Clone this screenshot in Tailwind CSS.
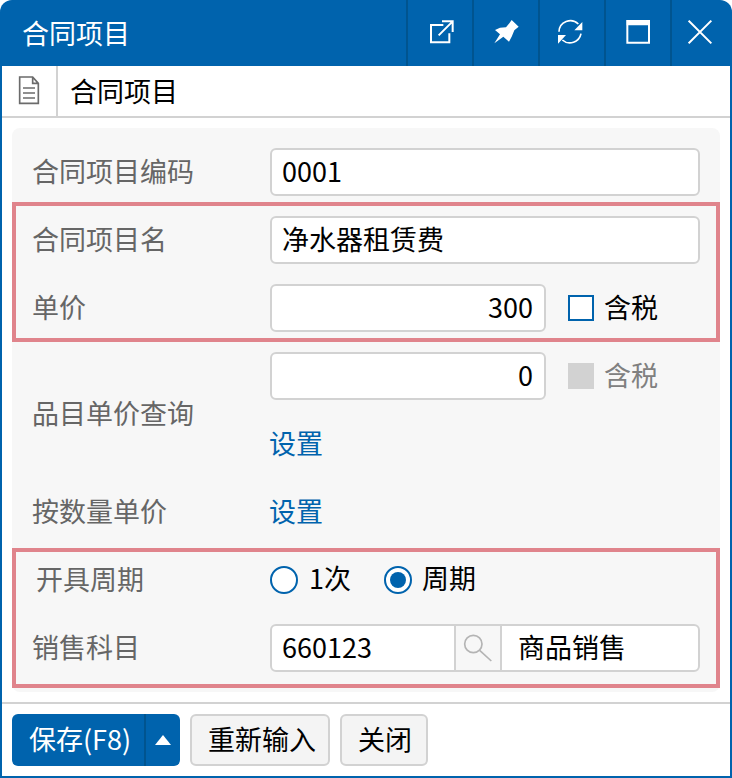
<!DOCTYPE html>
<html lang="zh-CN">
<head>
  <meta charset="UTF-8">
  <title>合同项目</title>
  <script src="https://cdn.jsdelivr.net/npm/@tailwindcss/browser@4"></script>
</head>
<body class="bg-white">
  <div class="w-[732px] h-[778px] flex flex-col overflow-hidden rounded-t-[12px] font-['Noto_Sans_CJK_SC','Noto_Sans',sans-serif] text-[27px] leading-[36px] text-black">
    <!-- title bar -->
    <div class="h-[66px] shrink-0 flex items-center justify-between bg-[#0063ad] text-white">
      <div class="pl-[22px]">合同项目</div>
      <div class="flex h-full">
        <div class="w-[66px] h-full flex items-center justify-center border-l-2 border-[#00548f]">
          <svg width="28" height="28" viewBox="78 57 84 84" fill="none" stroke="#fff" stroke-width="6"><path d="M130 75H93V127H148V100M116 106L158 64M126 64H158V96"/></svg>
        </div>
        <div class="w-[66px] h-full flex items-center justify-center border-l-2 border-[#00548f]">
          <svg width="28" height="28" viewBox="276 57 84 84" fill="#fff"><path d="M335 60L356 80L343 91L335 110L327 125L310 110L283 130L300 103L285 90L300 83L318 82L328 70Z"/></svg>
        </div>
        <div class="w-[66px] h-full flex items-center justify-center border-l-2 border-[#00548f]">
          <svg width="28" height="28" viewBox="474 57 84 84" fill="none" stroke="#fff" stroke-width="5"><path d="M477 95A34 34 0 0 1 535 72M543 101A34 34 0 0 1 487 120"/><path fill="#fff" stroke="none" d="M547 66V91H523ZM474 105H498L474 131Z"/></svg>
        </div>
        <div class="w-[66px] h-full flex items-center justify-center border-l-2 border-[#00548f]">
          <svg width="28" height="28" viewBox="672 57 84 84" fill="none" stroke="#fff" stroke-width="6"><path d="M682 63H747V128H682Z"/><path fill="#fff" stroke="none" d="M680 60H750V76H680Z"/></svg>
        </div>
        <div class="w-[62px] h-full flex items-center justify-center border-l-2 border-[#00548f]">
          <svg width="28" height="28" viewBox="864 57 84 84" fill="none" stroke="#fff" stroke-width="6"><path d="M866 62L934 130M934 62L866 130"/></svg>
        </div>
      </div>
    </div>

    <div class="flex-1 flex flex-col border-x-2 border-b-2 border-[#0063ad]">
      <!-- tab row -->
      <div class="h-[52px] shrink-0 flex border-b-2 border-[#d2d2d2]">
        <div class="w-[56px] flex items-center justify-center border-r-2 border-[#d2d2d2]">
          <svg width="32" height="32" viewBox="42 225 96 96" fill="none" stroke="#6b6b6b" stroke-width="5"><path d="M62 231H101L118 250V310H62ZM101 231V250H118M72 264H108M72 279H108M72 294H108"/></svg>
        </div>
        <div class="pl-[12px] flex items-center">合同项目</div>
      </div>

      <!-- form panel -->
      <div class="relative ml-[10px] mt-[10px] w-[708px] bg-[#f7f7f7] rounded-[8px] pt-[20px] pb-[20px] pl-[20px] flex flex-col gap-[20px] text-[#666]">
        <div class="flex h-[48px] items-center">
          <div class="w-[238px] pb-[2px]">合同项目编码</div>
          <input readonly value="0001" class="w-[430px] h-[48px] pl-[10px] pr-[11px] pb-[4px] bg-white border-2 border-[#d2d2d2] rounded-[6px] text-black outline-none">
        </div>
        <div class="flex h-[48px] items-center">
          <div class="w-[238px] pb-[2px]">合同项目名</div>
          <input readonly value="净水器租赁费" class="w-[430px] h-[48px] pl-[10px] pr-[11px] pb-[4px] bg-white border-2 border-[#d2d2d2] rounded-[6px] text-black outline-none">
        </div>
        <div class="flex h-[48px] items-center">
          <div class="w-[238px] pb-[2px]">单价</div>
          <input readonly value="300" class="w-[276px] h-[48px] px-[11px] pb-[4px] text-right bg-white border-2 border-[#d2d2d2] rounded-[6px] text-black outline-none">
          <div class="ml-[22px] w-[26px] h-[26px] bg-white border-2 border-[#0063ad]"></div>
          <div class="ml-[10px] pb-[2px] text-black">含税</div>
        </div>
        <div class="flex items-center">
          <div class="w-[238px] pt-[6px]">品目单价查询</div>
          <div class="flex flex-col gap-[20px]">
            <div class="flex h-[48px] items-center">
              <input readonly value="0" class="w-[276px] h-[48px] px-[11px] pb-[4px] text-right bg-white border-2 border-[#d2d2d2] rounded-[6px] text-black outline-none">
              <div class="ml-[22px] w-[26px] h-[26px] bg-[#d2d2d2]"></div>
              <div class="ml-[10px] pb-[2px] text-[#808080]">含税</div>
            </div>
            <div class="h-[48px] pb-[2px] flex items-center text-[#0063ad] -ml-[1px]">设置</div>
          </div>
        </div>
        <div class="flex h-[48px] items-center">
          <div class="w-[238px] pb-[2px]">按数量单价</div>
          <div class="text-[#0063ad] pb-[2px] -ml-[1px]">设置</div>
        </div>
        <div class="flex h-[48px] items-center">
          <div class="w-[238px] pl-[4px] pb-[2px]">开具周期</div>
          <div class="w-[28px] h-[28px] rounded-full bg-white border-2 border-[#0063ad]"></div>
          <div class="ml-[11px] pb-[4px] text-black">1次</div>
          <div class="ml-[33px] w-[28px] h-[28px] rounded-full bg-white border-2 border-[#0063ad] flex items-center justify-center">
            <div class="w-[16px] h-[16px] rounded-full bg-[#0063ad]"></div>
          </div>
          <div class="ml-[10px] pb-[4px] text-black">周期</div>
        </div>
        <div class="flex h-[48px] items-center">
          <div class="w-[238px] pb-[2px]">销售科目</div>
          <div class="w-[430px] h-[48px] flex bg-white border-2 border-[#d2d2d2] rounded-[6px] text-black">
            <div class="w-[182px] pl-[10px] pb-[2px] flex items-center">660123</div>
            <div class="w-[48px] flex items-center justify-center bg-[#f7f7f7] border-x-2 border-[#d2d2d2]">
              <svg width="32" height="32" viewBox="606 276 96 96" fill="none" stroke="#b4b4b4" stroke-width="5"><circle cx="640" cy="312" r="26"/><path d="M659 331L694 363"/></svg>
            </div>
            <div class="pl-[16px] pb-[2px] flex items-center">商品销售</div>
          </div>
        </div>
        <!-- red highlight boxes over the form -->
        <div class="absolute left-0 top-[74px] w-[708px] h-[140px] border-4 border-[#e0848c]"></div>
        <div class="absolute left-0 top-[420px] w-[708px] h-[140px] border-4 border-[#e0848c]"></div>
      </div>

      <!-- footer -->
      <div class="mt-[10px] flex-1 border-t-2 border-[#d2d2d2] pt-[10px] pl-[10px] flex gap-[10px] items-start">
        <div class="h-[52px] w-[168px] flex bg-[#0063ad] rounded-[6px] text-white">
          <div class="w-[134px] pl-[4px] pb-[2px] flex items-center justify-center border-r-2 border-[#00548f]">保存(F8)</div>
          <div class="flex-1 flex items-center justify-center">
            <svg width="16" height="10" viewBox="0 0 16 10" fill="#fff"><path d="M8 0L16 10H0Z"/></svg>
          </div>
        </div>
        <div class="h-[52px] w-[140px] pl-[4px] pb-[2px] flex items-center justify-center bg-[#f4f4f4] border-2 border-[#d2d2d2] rounded-[6px]">重新输入</div>
        <div class="h-[52px] w-[88px] pl-[2px] pb-[2px] flex items-center justify-center bg-[#f4f4f4] border-2 border-[#d2d2d2] rounded-[6px]">关闭</div>
      </div>
    </div>
  </div>
</body>
</html>
